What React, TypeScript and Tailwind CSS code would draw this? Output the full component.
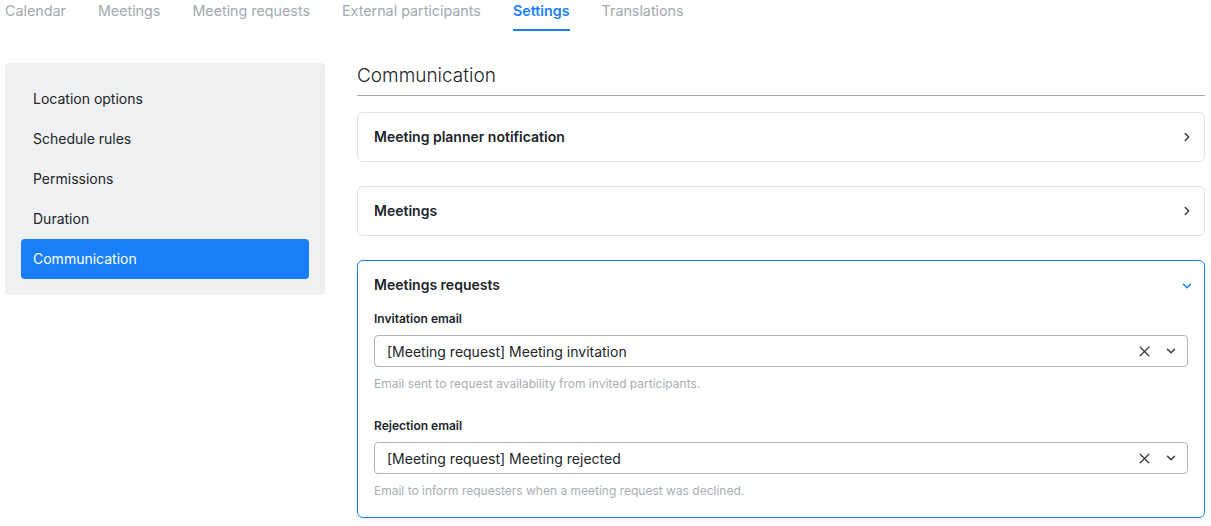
import { ChevronDown, ChevronRight, X } from "lucide-react";

const tabs = [
  "Calendar",
  "Meetings",
  "Meeting requests",
  "External participants",
  "Settings",
  "Translations",
];

const menu = [
  "Location options",
  "Schedule rules",
  "Permissions",
  "Duration",
  "Communication",
];

function Field({
  label,
  value,
  help,
}: {
  label: string;
  value: string;
  help: string;
}) {
  return (
    <div className="flex flex-col">
      <label className="text-[12px] font-semibold leading-[18px] text-[#212529]">
        {label}
      </label>
      <div className="mt-[7px] flex h-[32px] items-center rounded-[4px] border border-[#adb5bd] pl-3 pr-[9px]">
        <span className="flex-1 text-[14px] text-[#212529]">{value}</span>
        <X className="h-[17px] w-[17px] text-[#343a40]" strokeWidth={1.8} />
        <ChevronDown className="ml-[11px] h-[14px] w-[14px] text-[#343a40]" strokeWidth={2.5} />
      </div>
      <p className="mt-[9px] text-[12px] leading-[16px] text-[#a9aeb4]">{help}</p>
    </div>
  );
}

export default function App() {
  return (
    <div
      className="h-[526px] w-[1211px] overflow-hidden bg-white text-[#212529]"
      style={{ fontFamily: "Inter, 'Noto Sans', sans-serif" }}
    >
      <nav className="flex h-[31px] gap-8 pl-[5px]">
        {tabs.map((t) => {
          const active = t === "Settings";
          return (
            <div
              key={t}
              className={`flex h-full items-start border-b-2 pt-[2px] text-[14.3px] leading-[18px] ${
                active
                  ? "border-[#1a7ff6] font-semibold text-[#1a7ff6]"
                  : "border-transparent text-[#a3a9b0]"
              }`}
            >
              {t}
            </div>
          );
        })}
      </nav>

      <div className="mt-[32px] flex gap-8 pl-[5px]">
        <aside className="h-[232px] w-[320px] shrink-0 rounded-[4px] bg-[#eff0f2] p-4">
          {menu.map((m) => {
            const active = m === "Communication";
            return (
              <div
                key={m}
                className={`flex h-[40px] items-center rounded-[4px] px-3 pb-[2px] text-[14px] ${
                  active ? "bg-[#1a7ff6] text-white" : "text-[#212529]"
                }`}
              >
                {m}
              </div>
            );
          })}
        </aside>

        <main className="w-[848px]">
          <h1 className="pt-[1px] text-[19px] font-light leading-[24px] text-[#212529]">
            Communication
          </h1>
          <div className="mt-[7px] h-px bg-[#a3a7ad]" />

          <div className="mt-[16px] flex h-[50px] items-center rounded-[6px] border border-[#dee2e6] pl-4 pr-[10px]">
            <span className="flex-1 pb-[2px] text-[14px] font-semibold">
              Meeting planner notification
            </span>
            <ChevronRight className="h-[14px] w-[14px] text-[#343a40]" strokeWidth={2.5} />
          </div>

          <div className="mt-[24px] flex h-[50px] items-center rounded-[6px] border border-[#dee2e6] pl-4 pr-[10px]">
            <span className="flex-1 pb-[2px] text-[14px] font-semibold">Meetings</span>
            <ChevronRight className="h-[14px] w-[14px] text-[#343a40]" strokeWidth={2.5} />
          </div>

          <div className="mt-[24px] rounded-[6px] border border-[#1a7ff6] px-4 pb-[18px] shadow-[0_2px_6px_rgba(0,0,0,0.05)]">
            <div className="flex h-[49px] items-center">
              <span className="flex-1 pb-[2px] text-[14px] font-semibold">Meetings requests</span>
              <ChevronDown className="-mr-[6px] h-[14px] w-[14px] text-[#1a7ff6]" strokeWidth={2.5} />
            </div>
            <Field
              label="Invitation email"
              value="[Meeting request] Meeting invitation"
              help="Email sent to request availability from invited participants."
            />
            <div className="mt-[25px]">
              <Field
                label="Rejection email"
                value="[Meeting request] Meeting rejected"
                help="Email to inform requesters when a meeting request was declined."
              />
            </div>
          </div>
        </main>
      </div>
    </div>
  );
}
